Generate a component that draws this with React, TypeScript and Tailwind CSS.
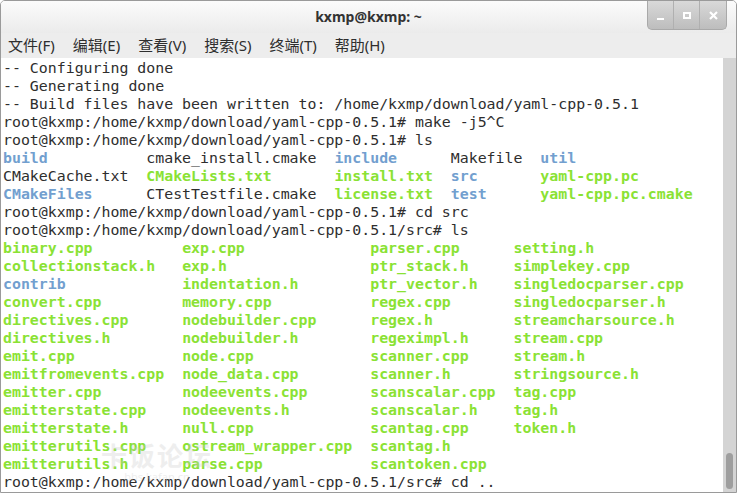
import React from "react";

type Seg = { t: string; c?: "g" | "b" };

const mono = { fontFamily: '"DejaVu Sans Mono", "Liberation Mono", monospace' };

// pad cells into fixed columns like ls does
const row = (cells: Seg[], cols: number[]): Seg[] =>
  cells.map((s, i) => {
    const w = i < cols.length ? cols[i] : 0;
    return { ...s, t: i < cells.length - 1 ? s.t.padEnd(w) : s.t };
  });

const first = [16, 21, 13, 10];
const second = [20, 21, 16];

const g = (t: string): Seg => ({ t, c: "g" });
const b = (t: string): Seg => ({ t, c: "b" });
const p = (t: string): Seg => ({ t });

const col1 = ["binary.cpp", "collectionstack.h", "contrib", "convert.cpp", "directives.cpp", "directives.h", "emit.cpp", "emitfromevents.cpp", "emitter.cpp", "emitterstate.cpp", "emitterstate.h", "emitterutils.cpp", "emitterutils.h"];
const col2 = ["exp.cpp", "exp.h", "indentation.h", "memory.cpp", "nodebuilder.cpp", "nodebuilder.h", "node.cpp", "node_data.cpp", "nodeevents.cpp", "nodeevents.h", "null.cpp", "ostream_wrapper.cpp", "parse.cpp"];
const col3 = ["parser.cpp", "ptr_stack.h", "ptr_vector.h", "regex.cpp", "regex.h", "regeximpl.h", "scanner.cpp", "scanner.h", "scanscalar.cpp", "scanscalar.h", "scantag.cpp", "scantag.h", "scantoken.cpp"];
const col4 = ["setting.h", "simplekey.cpp", "singledocparser.cpp", "singledocparser.h", "streamcharsource.h", "stream.cpp", "stream.h", "stringsource.h", "tag.cpp", "tag.h", "token.h"];

const prompt = "root@kxmp:/home/kxmp/download/yaml-cpp-0.5.1";

const lines: Seg[][] = [
  [p("-- Configuring done")],
  [p("-- Generating done")],
  [p("-- Build files have been written to: /home/kxmp/download/yaml-cpp-0.5.1")],
  [p(prompt + "# make -j5^C")],
  [p(prompt + "# ls")],
  row([b("build"), p("cmake_install.cmake"), b("include"), p("Makefile"), b("util")], first),
  row([p("CMakeCache.txt"), g("CMakeLists.txt"), g("install.txt"), b("src"), g("yaml-cpp.pc")], first),
  row([b("CMakeFiles"), p("CTestTestfile.cmake"), g("license.txt"), b("test"), g("yaml-cpp.pc.cmake")], first),
  [p(prompt + "# cd src")],
  [p(prompt + "/src# ls")],
  ...col1.map((f, i) => {
    const cells: Seg[] = [f === "contrib" ? b(f) : g(f), g(col2[i]), g(col3[i])];
    if (col4[i]) cells.push(g(col4[i]));
    return row(cells, second);
  }),
  [p(prompt + "/src# cd ..")],
];

const menus = ["文件(F)", "编辑(E)", "查看(V)", "搜索(S)", "终端(T)", "帮助(H)"];

export default function App() {
  return (
    <div
      className="w-[737px] h-[493px] flex flex-col bg-white overflow-hidden border border-[#9a9a9a] rounded-t-[5px] relative"
      style={{ fontFamily: '"Noto Sans", "Noto Sans CJK SC", sans-serif' }}
    >
      {/* title bar */}
      <div className="h-[32px] shrink-0 flex items-center justify-center bg-gradient-to-b from-[#fbfbfb] to-[#ebebeb] relative">
        <span className="text-[14px] font-bold text-[#333] mt-[-1px]">kxmp@kxmp: ~</span>
        <div className="absolute right-[9px] top-0 h-[29px] flex rounded-bl-[5px] rounded-br-[5px] border border-t-0 border-[#a9a9a9] overflow-hidden bg-gradient-to-b from-[#d9d9d9] to-[#bdbdbd]">
          <div className="w-[26px] flex items-center justify-center border-r border-[#b0b0b0]">
            <div className="w-[7px] h-[2px] bg-white mt-[7px]" />
          </div>
          <div className="w-[26px] flex items-center justify-center border-r border-[#b0b0b0]">
            <div className="w-[8px] h-[7px] border-2 border-white" />
          </div>
          <div className="w-[26px] flex items-center justify-center">
            <svg width="9" height="9" viewBox="0 0 9 9">
              <path d="M1 1L8 8M8 1L1 8" stroke="white" strokeWidth="2.2" />
            </svg>
          </div>
        </div>
      </div>
      {/* menu bar */}
      <div className="h-[25px] shrink-0 flex items-center bg-[#ededed] pl-[7px] gap-[18px] text-[15px] text-[#2e2e2e]">
        {menus.map((m) => (
          <span key={m}>{m}</span>
        ))}
      </div>
      {/* terminal */}
      <div className="flex-1 flex min-h-0">
        <div className="flex-1 pl-[2px] pt-[1px] text-[14.88px] leading-[18px] text-[#2e2e2e] whitespace-pre" style={mono}>
          {lines.map((l, i) => (
            <div key={i} className="h-[18px]">
              {l.map((s, j) => (
                <span
                  key={j}
                  className={
                    s.c === "g"
                      ? "text-[#8ae234] font-bold"
                      : s.c === "b"
                      ? "text-[#729fcf] font-bold"
                      : ""
                  }
                >
                  {s.t}
                </span>
              ))}
            </div>
          ))}
        </div>
        <div className="w-[13px] shrink-0 bg-[#d4d4d4] flex flex-col justify-end items-center pb-[3px]">
          <div className="w-[7px] h-[36px] rounded-full bg-[#9e9e9e]" />
        </div>
      </div>
      {/* watermark */}
      <div className="absolute left-[100px] top-[440px] flex flex-col items-center pointer-events-none opacity-30">
        <span className="text-[26px] leading-[30px] font-bold text-[#c8c8c8] tracking-[2px]">卡饭论坛</span>
        <span className="text-[11px] leading-[12px] text-[#c8c8c8]">bbs.kafan.cn</span>
      </div>
    </div>
  );
}
